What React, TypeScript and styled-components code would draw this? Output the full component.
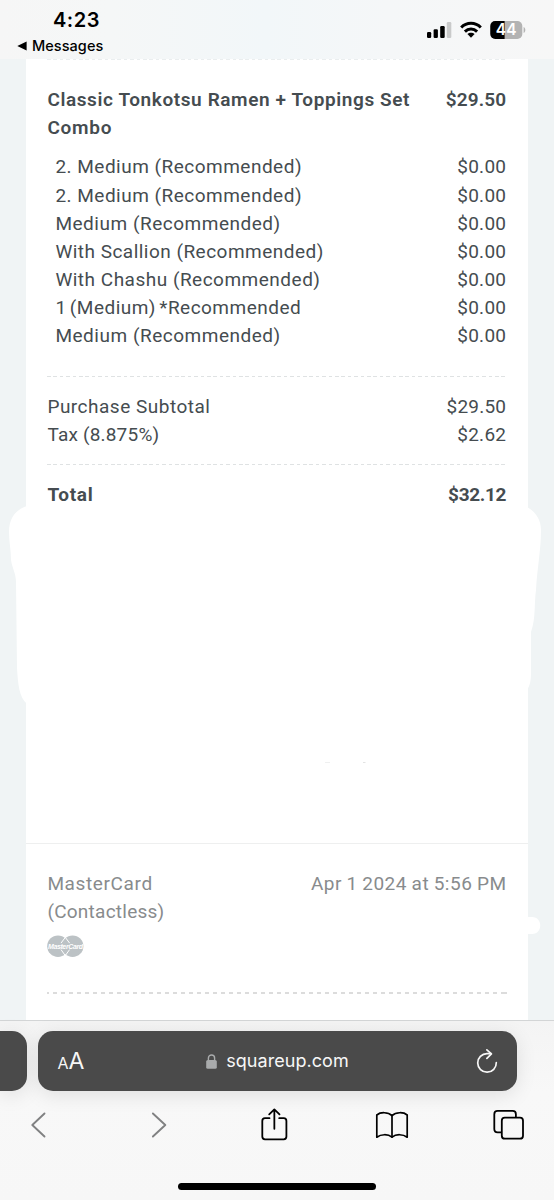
import React from "react";
import styled, { createGlobalStyle } from "styled-components";

const GlobalStyle = createGlobalStyle`
  * { box-sizing: border-box; }
  body { margin: 0; background: #f0f4f5; }
`;

const Screen = styled.div`
  width: 554px;
  height: 1200px;
  display: flex;
  flex-direction: column;
  overflow: hidden;
  background: #f0f4f5;
  font-family: Roboto, "Liberation Sans", sans-serif;
`;

const StatusBar = styled.header`
  height: 59px;
  flex: none;
  display: flex;
  justify-content: space-between;
  align-items: flex-start;
  background: linear-gradient(90deg, #f6f6f6 0%, #f5f7f7 20%, #f2f7f9 48%, #f5f7f8 70%, #f7f7f7 100%);
  padding: 0 28px 0 17px;
  font-family: Inter, sans-serif;
  color: #000;
`;

const StatusLeft = styled.div`
  display: flex;
  flex-direction: column;
`;

const Clock = styled.div`
  padding: 8px 0 0 36px;
  font-size: 20px;
  font-weight: 600;
  line-height: 25px;
  letter-spacing: 0.5px;
`;

const BackLink = styled.div`
  display: flex;
  align-items: center;
  gap: 5px;
  padding-top: 4px;
  font-size: 14.5px;
  font-weight: 500;
  line-height: 18px;
  letter-spacing: 0.05px;
`;

const StatusIcons = styled.div`
  display: flex;
  padding-top: 20px;
`;

const Spacer = styled.div<{ $width: number }>`
  width: ${(p) => p.$width}px;
`;

const Page = styled.main`
  flex: none;
  height: 961px;
  padding: 0 26px;
  position: relative;
`;

const Card = styled.section`
  height: 100%;
  background: #fff;
  display: flex;
  flex-direction: column;
`;

const Eraser = styled.svg`
  position: absolute;
  left: 0;
  top: 441px;
  pointer-events: none;
`;

const Rule = styled.div<{ $period: number; $dash: number; $size: number; $color: string; $shift?: number }>`
  height: ${(p) => p.$size}px;
  margin: 0 21px;
  flex: none;
  background: repeating-linear-gradient(
    90deg,
    ${(p) => p.$color} 0 ${(p) => p.$dash}px,
    transparent ${(p) => p.$dash}px ${(p) => p.$period}px
  );
  background-position-x: ${(p) => p.$shift ?? 0}px;
`;

const Group = styled.div<{ $top: number; $height: number; $color?: string; $weight?: number }>`
  flex: none;
  height: ${(p) => p.$height}px;
  padding: ${(p) => p.$top}px 22px 0 21.4px;
  color: ${(p) => p.$color ?? "#454c50"};
  font-weight: ${(p) => p.$weight ?? 400};
`;

const Row = styled.div<{ $indent?: number }>`
  display: flex;
  justify-content: space-between;
  padding-left: ${(p) => p.$indent ?? 0}px;
  font-size: 19px;
  line-height: 28.15px;
  white-space: nowrap;
`;

const Modifiers = styled.div`
  padding-top: 10.8px;
  font-weight: 400;
`;

const Text = styled.span<{ $track?: number; $word?: number }>`
  letter-spacing: ${(p) => p.$track ?? 0.49}px;
  word-spacing: ${(p) => p.$word ?? 0}px;
  margin-right: -${(p) => Math.max(0, p.$track ?? 0.49)}px;
`;

const Payment = styled.div`
  border-top: 1px solid #eeefef;
  flex: none;
  height: 149px;
`;

const CardLogo = styled.svg`
  display: block;
  margin-top: 8.6px;
`;

const BrowserBar = styled.footer`
  flex: 1;
  display: flex;
  flex-direction: column;
  border-top: 1px solid #d3d5d6;
  background: linear-gradient(180deg, #f4f4f4 0%, #f8f8f8 40%, #f7f7f7 100%);
  color: #000;
`;

const AddressRow = styled.div`
  display: flex;
  gap: 11px;
  padding-top: 10px;
  height: 70px;
  flex: none;
`;

const TabEdge = styled.div`
  width: 26.5px;
  height: 60px;
  background: #4a4a4a;
  border-radius: 0 15px 15px 0;
  box-shadow: 0 4px 20px rgba(0, 0, 0, 0.1);
`;

const AddressBar = styled.div`
  width: 479px;
  height: 60px;
  background: #4a4a4a;
  border-radius: 15px;
  box-shadow: 0 4px 20px rgba(0, 0, 0, 0.1);
  display: flex;
  align-items: center;
  justify-content: space-between;
  padding: 0 19px 0 20px;
  font-family: Inter, sans-serif;
  color: #f7f7f7;
`;

const TextSize = styled.div`
  display: flex;
  align-items: baseline;
  font-size: 23px;
  line-height: 28px;
  padding-top: 1px;
`;

const SmallA = styled.span`
  font-size: 16px;
`;

const Site = styled.div`
  display: flex;
  align-items: center;
  gap: 9px;
  font-size: 18px;
  line-height: 24px;
  letter-spacing: 0.05px;
  padding-right: 5px;
`;

const Toolbar = styled.nav`
  display: grid;
  grid-template-columns: 119.5px 110.5px 114.5px 117px 32px;
  align-items: center;
  height: 68px;
  flex: none;
  padding-left: 30px;
`;

const HomeIndicator = styled.div`
  width: 198px;
  height: 7px;
  border-radius: 4px;
  background: #000;
  margin-top: 23.5px;
  align-self: center;
`;

const modifiers = [
  { name: "2. Medium (Recommended)", track: 0.49 },
  { name: "2. Medium (Recommended)", track: 0.49 },
  { name: "Medium (Recommended)", track: 0.52 },
  { name: "With Scallion (Recommended)", track: 0.48 },
  { name: "With Chashu (Recommended)", track: 0.5 },
  { name: "1 (Medium) *Recommended", track: 0.48, word: -1.9 },
  { name: "Medium (Recommended)", track: 0.52 },
];

const SignalIcon = () => (
  <svg width="26" height="20" viewBox="0 0 26 20">
    <rect x="0" y="12" width="4.2" height="6" rx="1.2" />
    <rect x="6.6" y="9.3" width="4.3" height="8.7" rx="1.2" />
    <rect x="13.2" y="6" width="4.5" height="12" rx="1.2" />
    <rect x="19.8" y="2" width="4.5" height="16" rx="1.2" fill="#c9caca" />
  </svg>
);

const WifiIcon = () => (
  <svg width="22" height="20" viewBox="0 0 22 20">
    <g fill="none" stroke="#000" strokeWidth="3">
      <path d="M1.2 7.5 C6.7 1.9 15.3 1.9 20.8 7.5" />
      <path d="M4.9 11.6 C8.4 8.2 13.6 8.2 17.1 11.6" />
    </g>
    <path d="M7.4 14.1 C9.4 12.2 12.6 12.2 14.6 14.1 L11 17.7 Z" />
  </svg>
);

const BatteryIcon = () => (
  <svg width="36" height="20" viewBox="0 0 36 20">
    <defs>
      <clipPath id="battery-body">
        <rect x="0.3" y="1" width="32" height="18" rx="5" />
      </clipPath>
    </defs>
    <g clipPath="url(#battery-body)">
      <rect width="33" height="20" fill="#b3b3b3" />
      <rect width="14.6" height="20" fill="#000" />
    </g>
    <path d="M33.6 7 C35.9 7.8 35.9 12.2 33.6 13 Z" fill="#b3b3b3" />
    <text x="16.2" y="15.4" textAnchor="middle" fontFamily="Inter" fontWeight="600" fontSize="15.5" fill="#fff">
      44
    </text>
  </svg>
);

const MasterCardLogo = () => (
  <CardLogo width="44" height="24" viewBox="0 0 44 24">
    <circle cx="11" cy="11.2" r="10.8" fill="#bcc2c5" />
    <circle cx="25.6" cy="11.2" r="10.8" fill="#bcc2c5" />
    <path d="M14 8.1 L18.3 2.4 L22.6 8.1 M14 14.6 L18.3 20.6 L22.6 14.6" fill="none" stroke="#fff" strokeWidth="1" />
    <text
      x="18.3"
      y="13.9"
      textAnchor="middle"
      fontFamily="Liberation Sans"
      fontWeight="700"
      fontStyle="italic"
      fontSize="7"
      letterSpacing="-0.38"
      fill="#fff"
    >
      MasterCard
    </text>
  </CardLogo>
);

export default function App() {
  return (
    <>
      <GlobalStyle />
      <Screen>
        <StatusBar>
          <StatusLeft>
            <Clock>4:23</Clock>
            <BackLink>
              <svg width="10" height="10" viewBox="0 0 10 10">
                <path d="M0.3 5 L9.6 0.4 V9.6 Z" />
              </svg>
              Messages
            </BackLink>
          </StatusLeft>
          <StatusIcons>
            <SignalIcon />
            <Spacer $width={7} />
            <WifiIcon />
            <Spacer $width={8} />
            <BatteryIcon />
          </StatusIcons>
        </StatusBar>

        <Page>
          <Card>
            <Rule $period={6.4} $dash={3.6} $size={1} $color="#eaeeef" />
            <Group $top={26.3} $height={316} $weight={600}>
              <Row>
                <Text $track={0.6}>Classic Tonkotsu Ramen + Toppings Set</Text>
                <Text $track={0.1}>$29.50</Text>
              </Row>
              <Row>
                <Text $track={0.75}>Combo</Text>
              </Row>
              <Modifiers>
                {modifiers.map((m, i) => (
                  <Row key={i} $indent={8}>
                    <Text $track={m.track} $word={m.word}>{m.name}</Text>
                    <Text $track={0.25}>$0.00</Text>
                  </Row>
                ))}
              </Modifiers>
            </Group>
            <Rule $period={6.4} $dash={3.6} $size={1} $color="#dfe2e3" />
            <Group $top={15.5} $height={87}>
              <Row>
                <Text $track={0.5}>Purchase Subtotal</Text>
                <Text $track={0.2}>$29.50</Text>
              </Row>
              <Row>
                <Text $track={0.2}>Tax (8.875%)</Text>
                <Text $track={0.25}>$2.62</Text>
              </Row>
            </Group>
            <Rule $period={6.4} $dash={3.6} $size={1} $color="#dfe2e3" />
            <Group $top={15.5} $height={378} $weight={700}>
              <Row>
                <Text $track={0.7}>Total</Text>
                <Text $track={-0.35}>$32.12</Text>
              </Row>
            </Group>
            <Payment>
              <Group $top={26} $height={148} $color="#888b8d">
                <Row>
                  <Text $track={0.62}>MasterCard</Text>
                  <Text $track={0.52} $word={-0.7}>Apr 1 2024 at 5:56 PM</Text>
                </Row>
                <Row>
                  <Text $track={0.25}>(Contactless)</Text>
                </Row>
                <MasterCardLogo />
              </Group>
            </Payment>
            <Rule $period={8} $dash={4} $size={2} $color="#dcdcdc" $shift={-2} />
          </Card>
          <Eraser width="554" height="520" viewBox="0 500 554 520">
            <path
              fill="#fff"
              d="M27 506 C17 509 9 517 9 532 C9 542 11 550 11 560 C12 568 16 573 16 582 L17 668 C18 684 19 697 27 704 L527 690 C531 684 531 678 531 670 L531 632 C536 618 534 604 536 590 C537 570 541 550 541 530 C541 520 536 512 527 507 Z"
            />
            <path fill="#fff" d="M527 917 H532 C543 917 543 934 532 934 H527 Z" />
            <path stroke="#eff0f0" strokeWidth="1" d="M325 762.5 H330" />
            <path stroke="#e2e3e3" strokeWidth="1" d="M363 762.5 H365.5" />
          </Eraser>
        </Page>

        <BrowserBar>
          <AddressRow>
            <TabEdge />
            <AddressBar>
              <TextSize>
                <SmallA>A</SmallA>A
              </TextSize>
              <Site>
                <svg width="11" height="15" viewBox="0 0 11 15">
                  <rect x="0.2" y="6" width="10.6" height="8.8" rx="1.6" fill="#a9abac" />
                  <path d="M2.4 6.5 V4 C2.4 -0.1 8.6 -0.1 8.6 4 V6.5" fill="none" stroke="#a9abac" strokeWidth="1.4" />
                </svg>
                squareup.com
              </Site>
              <svg width="22" height="25" viewBox="0 0 22 25" fill="none" stroke="#f7f7f7" strokeWidth="1.7" strokeLinecap="round" strokeLinejoin="round">
                <path d="M20.3 13.6 A9.3 9.3 0 1 1 11 4.6 H15" />
                <path d="M10.9 0.9 L15.4 4.9 L10.9 9.4" />
              </svg>
            </AddressBar>
          </AddressRow>
          <Toolbar>
            <svg width="17" height="26" viewBox="0 0 17 26" fill="none" stroke="#808182" strokeWidth="1.9" strokeLinecap="round" strokeLinejoin="round">
              <path d="M14.5 1.5 L2.3 13 L14.5 24.5" />
            </svg>
            <svg width="17" height="26" viewBox="0 0 17 26" fill="none" stroke="#808182" strokeWidth="1.9" strokeLinecap="round" strokeLinejoin="round">
              <path d="M2.9 1.5 L15.3 13 L2.9 24.5" />
            </svg>
            <svg width="28" height="34" viewBox="0 0 28 34" fill="none" stroke="#000" strokeWidth="1.8" strokeLinecap="round" strokeLinejoin="round">
              <path d="M9.5 10.2 H5 Q2.3 10.2 2.3 12.9 V28.6 Q2.3 31.3 5 31.3 H23.7 Q26.4 31.3 26.4 28.6 V12.9 Q26.4 10.2 23.7 10.2 H19.2" />
              <path d="M14.35 20.8 V1.6 M9.2 6.4 L14.35 1.4 L19.5 6.4" />
            </svg>
            <svg width="34" height="28" viewBox="0 0 34 28" fill="none" stroke="#000" strokeWidth="1.7" strokeLinecap="round" strokeLinejoin="round">
              <path d="M17 4.7 C13 0.8 5.5 0.9 1.8 4 V26.2 C6 23 13 22.8 17 26.2 C21 22.8 28 23 32.2 26.2 V4 C28.5 0.9 21 0.8 17 4.7 Z" />
              <path d="M17 4.7 V26" />
            </svg>
            <svg width="32" height="32" viewBox="0 0 32 32" fill="none" stroke="#000" strokeWidth="1.8" strokeLinejoin="round">
              <rect x="9.8" y="8.7" width="21.2" height="21" rx="3" />
              <path d="M9.8 23.3 H5.6 Q2.3 23.3 2.3 20 V5.2 Q2.3 1.9 5.6 1.9 H20.6 Q23.9 1.9 23.9 5.2 V8.7" />
            </svg>
          </Toolbar>
          <HomeIndicator />
        </BrowserBar>
      </Screen>
    </>
  );
}
